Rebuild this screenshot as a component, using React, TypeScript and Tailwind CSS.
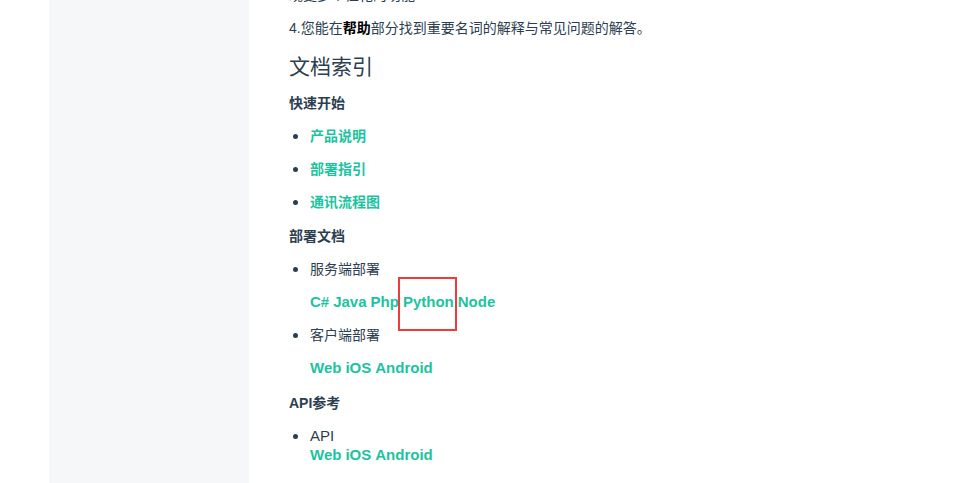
const green = 'text-[#1cc39f]';

function Bullet({ children }: { children: React.ReactNode }) {
  return (
    <div className="flex items-center h-[22px]">
      <span className="w-[5px] h-[5px] rounded-full bg-[#2c3e50] ml-[4px] mr-[12px]" />
      {children}
    </div>
  );
}

function Links({ items, className = '' }: { items: string[]; className?: string }) {
  return (
    <div className={`pl-[21px] flex gap-[4px] text-[15px] font-bold ${green} ${className}`}>
      {items.map((t) => (
        <a key={t} href="#" className="relative">
          {t}
        </a>
      ))}
    </div>
  );
}

export default function App() {
  return (
    <div
      className="w-[969px] h-[483px] overflow-hidden bg-white flex text-[#2c3e50]"
      style={{ fontFamily: '"Liberation Sans", "Noto Sans CJK SC", sans-serif' }}
    >
      <aside className="ml-[49px] w-[200px] h-full bg-[#f6f7f9] shrink-0" />
      <main className="pl-[40px] flex flex-col">
        <p className="-mt-[16px] h-[22px] leading-[22px] text-[14px]">现更多个性化的功能</p>
        <p className="mt-[11px] h-[22px] leading-[22px] text-[14px]">
          4.您能在<strong className="text-black">帮助</strong>部分找到重要名词的解释与常见问题的解答。
        </p>
        <h2 className="mt-[11px] h-[34px] leading-[34px] text-[21px] font-normal">文档索引</h2>

        <h3 className="mt-[8px] h-[22px] leading-[22px] text-[14px] font-bold">快速开始</h3>
        <div className="mt-[11px] flex flex-col gap-[11px] text-[14px] font-bold">
          <Bullet><a href="#" className={green}>产品说明</a></Bullet>
          <Bullet><a href="#" className={green}>部署指引</a></Bullet>
          <Bullet><a href="#" className={green}>通讯流程图</a></Bullet>
        </div>

        <h3 className="mt-[12px] h-[22px] leading-[22px] text-[14px] font-bold">部署文档</h3>
        <div className="mt-[11px] flex flex-col text-[14px]">
          <Bullet><span>服务端部署</span></Bullet>
          <div className="relative mt-[11px] h-[22px] leading-[22px]">
            <Links items={['C#', 'Java', 'Php', 'Python', 'Node']} />
            <div className="absolute left-[109px] top-[-14px] w-[59px] h-[54px] border-[2px] border-[#ef3b3b]" />
          </div>
          <div className="mt-[11px]">
            <Bullet><span>客户端部署</span></Bullet>
          </div>
          <div className="mt-[11px] h-[22px] leading-[22px]">
            <Links items={['Web', 'iOS', 'Android']} />
          </div>
        </div>

        <h3 className="mt-[13px] h-[22px] leading-[22px] text-[14px] font-bold">API参考</h3>
        <div className="mt-[12px] flex flex-col">
          <div className="flex items-center h-[20px] text-[15px]">
            <span className="w-[5px] h-[5px] rounded-full bg-[#2c3e50] ml-[4px] mr-[12px]" />
            <span>API</span>
          </div>
          <div className="h-[18px] leading-[18px]">
            <Links items={['Web', 'iOS', 'Android']} />
          </div>
          <div className="mt-[14px] flex items-center h-[22px] text-[15px]">
            <span className="w-[5px] h-[5px] rounded-full bg-[#2c3e50] ml-[4px] mr-[12px]" />
            <span>Function</span>
          </div>
        </div>
      </main>
    </div>
  );
}
